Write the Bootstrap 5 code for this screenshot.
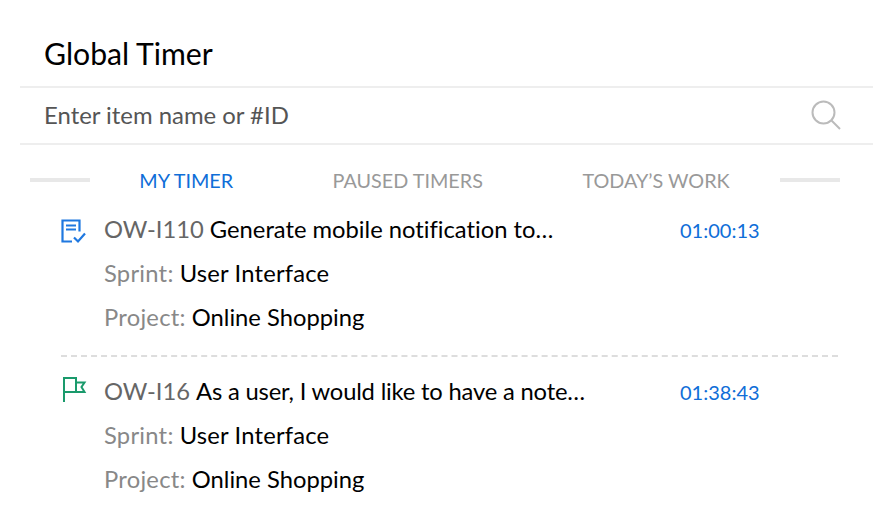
<!DOCTYPE html>
<html><head><meta charset="utf-8">
<link rel="stylesheet" href="https://cdn.jsdelivr.net/npm/bootstrap@5.3.0/dist/css/bootstrap.min.css">
<style>
html,body{height:516px;overflow:hidden;background:#fff}
body{font-family:Lato,"Liberation Sans",sans-serif;color:#000;font-variant-ligatures:none}
.gt-panel{margin:0 19px 0 20px}
.gt-title{font-size:30.2px;line-height:34px;padding:36px 0 16px 24px;border-bottom:2px solid #eee}
.gt-search{height:57px;padding:0 32px 2px 24px;border-bottom:2px solid #eee;font-size:23.9px;color:#555}
.gt-tabs{height:70px;padding:0 33px 0 10px;font-size:19.8px;color:#999;white-space:nowrap}
.gt-rule{width:60px;height:4px;background:#e8e8e8;flex:none}
.gt-tab{padding:2px 50.2px 0 49.2px}
.gt-active{color:#0f6ed8}
.gt-item{padding:0 35px 0 41px;font-size:23.75px;line-height:44px}
.gt-list{margin-top:-8px}
.gt-row{margin:0 35px 0 41px;padding-bottom:16px;margin-bottom:12px;border-bottom:2px dashed #ddd;font-size:23.75px;line-height:44px}
.gt-icon{width:43px;flex:none;display:inline-block}
.gt-icon svg{display:block;margin-top:8px}
.gt-icon .gt-doc{margin-top:12px}
.gt-muted{color:#888;letter-spacing:.25px}
.gt-name{letter-spacing:.2px}
.gt-code{color:#666}
.gt-tight{letter-spacing:-.18px}
.gt-time{font-size:20px;color:#0f6ed8;width:158px;padding-top:2px;line-height:42px}
</style></head><body>
<div class="gt-panel">
<div class="gt-title">Global Timer</div>
<div class="gt-search d-flex align-items-center justify-content-between"><span>Enter item name or #ID</span>
<svg width="30" height="30" viewBox="0 0 30 30" fill="none" stroke="#bbb" stroke-width="2"><circle cx="12.500" cy="12.500" r="11"/><path d="M20.500 20.500L29 29"/></svg></div>
<div class="gt-tabs d-flex align-items-center justify-content-between">
<span class="gt-rule"></span><span class="gt-tab gt-active">MY TIMER</span><span class="gt-tab">PAUSED TIMERS</span><span class="gt-tab">TODAY’S WORK</span><span class="gt-rule"></span></div>
<div class="gt-list">
<div class="gt-row">
<div class="d-flex"><span class="gt-icon"><svg class="gt-doc" width="26" height="26" viewBox="0 0 26 26" fill="none" stroke="#1f78e0" stroke-width="2.200"><path d="M11 22.500H1.500V1.500H18.500V12.500"/><path d="M5 6.500H15M5 10.500H15"/><path d="M13 18.500l4 4 7-8"/></svg></span>
<span class="flex-grow-1 text-nowrap"><span class="gt-code">OW-I110</span> Generate mobile notification to…</span><span class="gt-time text-nowrap">01:00:13</span></div>
<div><span class="gt-icon"></span><span class="gt-muted">Sprint:</span> <span class="gt-name">User Interface</span></div>
<div><span class="gt-icon"></span><span class="gt-muted">Project:</span> Online Shopping</div>
</div>
<div class="gt-item">
<div class="d-flex"><span class="gt-icon"><svg width="26" height="26" viewBox="0 0 26 26" fill="none" stroke="#1a9a6c" stroke-width="2"><path d="M3 25V1H15V15H3"/><path d="M15 5.500H23.500L20.500 10L23.500 15H9"/></svg></span>
<span class="flex-grow-1 text-nowrap"><span class="gt-code">OW-I16</span> <span class="gt-tight">As a user, I would like to have a note…</span></span><span class="gt-time text-nowrap">01:38:43</span></div>
<div><span class="gt-icon"></span><span class="gt-muted">Sprint:</span> <span class="gt-name">User Interface</span></div>
<div><span class="gt-icon"></span><span class="gt-muted">Project:</span> Online Shopping</div>
</div>
</div>
</div>
</body></html>
